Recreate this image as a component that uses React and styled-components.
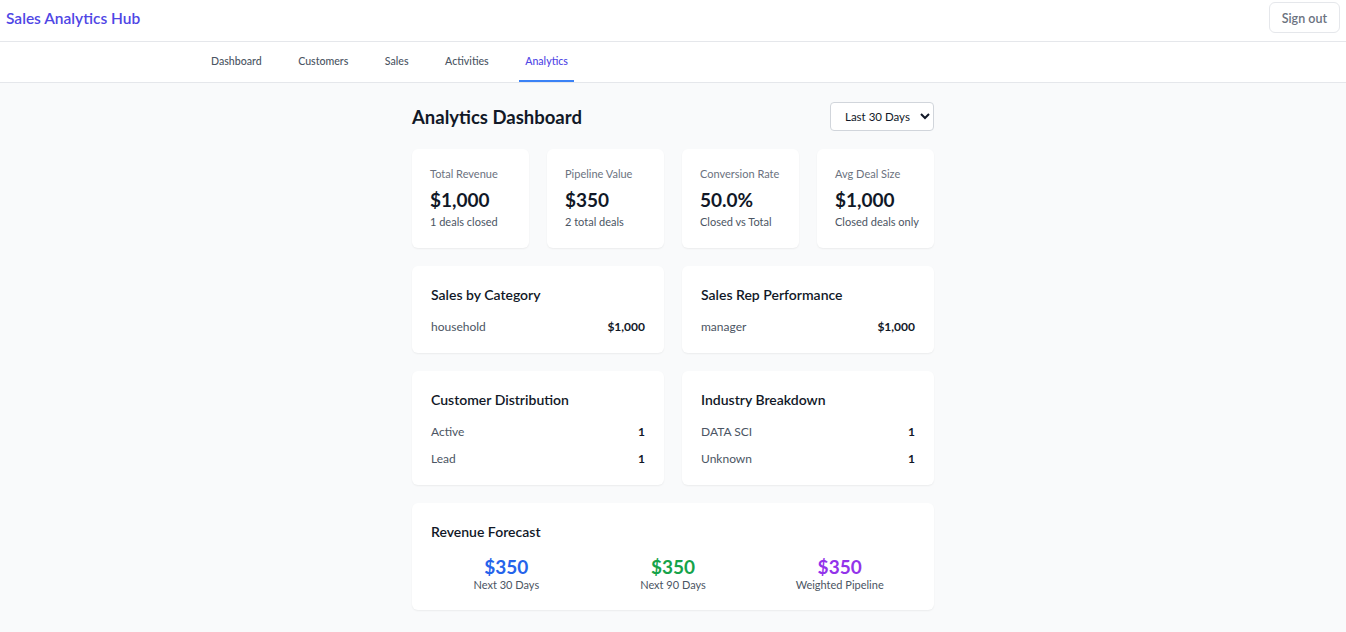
import styled, { createGlobalStyle } from "styled-components";

const GlobalStyle = createGlobalStyle`
  * { box-sizing: border-box; }
  body {
    margin: 0;
    background: #f9fafb;
    font-family: Lato, "Open Sans", sans-serif;
    color: #111827;
  }
`;

const stats = [
  { label: "Total Revenue", value: "$1,000", note: "1 deals closed" },
  { label: "Pipeline Value", value: "$350", note: "2 total deals" },
  { label: "Conversion Rate", value: "50.0%", note: "Closed vs Total" },
  { label: "Avg Deal Size", value: "$1,000", note: "Closed deals only" },
];

const tabs = ["Dashboard", "Customers", "Sales", "Activities", "Analytics"];

const forecast = [
  { value: "$350", label: "Next 30 Days", color: "#2563eb" },
  { value: "$350", label: "Next 90 Days", color: "#16a34a" },
  { value: "$350", label: "Weighted Pipeline", color: "#9333ea" },
];

// один список "подпись — значение"
const ListCard = ({ title, rows }) => (
  <Card>
    <CardTitle>{title}</CardTitle>
    <Rows>
      {rows.map(([k, v]) => (
        <Row key={k}>
          <RowLabel>{k}</RowLabel>
          <RowValue>{v}</RowValue>
        </Row>
      ))}
    </Rows>
  </Card>
);

export default function App() {
  return (
    <>
      <GlobalStyle />
      <Header>
        <Brand>Sales Analytics Hub</Brand>
        <SignOut>Sign out</SignOut>
      </Header>
      <Nav>
        {tabs.map((t) => (
          <Tab key={t} $active={t === "Analytics"}>
            {t}
          </Tab>
        ))}
      </Nav>
      <Main>
        <TitleRow>
          <PageTitle>Analytics Dashboard</PageTitle>
          <RangeSelect defaultValue="30">
            <option value="30">Last 30 Days</option>
            <option value="90">Last 90 Days</option>
          </RangeSelect>
        </TitleRow>

        <StatGrid>
          {stats.map((s) => (
            <StatCard key={s.label}>
              <StatLabel>{s.label}</StatLabel>
              <StatValue>{s.value}</StatValue>
              <StatNote>{s.note}</StatNote>
            </StatCard>
          ))}
        </StatGrid>

        <TwoCol>
          <ListCard title="Sales by Category" rows={[["household", "$1,000"]]} />
          <ListCard title="Sales Rep Performance" rows={[["manager", "$1,000"]]} />
        </TwoCol>

        <TwoCol>
          <ListCard title="Customer Distribution" rows={[["Active", "1"], ["Lead", "1"]]} />
          <ListCard title="Industry Breakdown" rows={[["DATA SCI", "1"], ["Unknown", "1"]]} />
        </TwoCol>

        <Card>
          <CardTitle>Revenue Forecast</CardTitle>
          <ForecastGrid>
            {forecast.map((f) => (
              <ForecastItem key={f.label}>
                <ForecastValue $color={f.color}>{f.value}</ForecastValue>
                <ForecastLabel>{f.label}</ForecastLabel>
              </ForecastItem>
            ))}
          </ForecastGrid>
        </Card>
      </Main>
    </>
  );
}

const Header = styled.header`
  height: 42px;
  display: flex;
  align-items: center;
  justify-content: space-between;
  padding: 0 6px;
  background: #fff;
  border-bottom: 1px solid #e5e7eb;
`;

const Brand = styled.h1`
  margin: 0;
  font-size: 15.5px;
  font-weight: 600;
  color: #4f46e5;
  position: relative;
  top: -3px;
`;

const SignOut = styled.button`
  height: 31px;
  padding: 2px 12px 0;
  background: #fff;
  border: 1px solid #e5e7eb;
  border-radius: 6px;
  font-family: inherit;
  font-size: 12.5px;
  font-weight: 600;
  color: #6b7280;
  position: relative;
  top: -3px;
`;

const Nav = styled.nav`
  height: 41px;
  display: flex;
  gap: 24.5px;
  padding-left: 205px;
  background: #fff;
  border-bottom: 1px solid #e5e7eb;
`;

const Tab = styled.a`
  display: flex;
  align-items: center;
  padding: 0 6px 1px;
  font-size: 10.6px;
  font-weight: 500;
  color: ${(p) => (p.$active ? "#4f46e5" : "#4b5563")};
  border-bottom: 2px solid ${(p) => (p.$active ? "#3b82f6" : "transparent")};
`;

const Main = styled.main`
  width: 522px;
  margin: 0 auto;
  padding: 19px 0 24px;
  display: flex;
  flex-direction: column;
  gap: 18px;
`;

const TitleRow = styled.div`
  display: flex;
  align-items: center;
  justify-content: space-between;
`;

const PageTitle = styled.h2`
  margin: 0;
  font-size: 18.5px;
  font-weight: 700;
  color: #111827;
`;

const RangeSelect = styled.select`
  width: 104px;
  height: 29px;
  padding: 0 6px 0 10px;
  border: 1px solid #d1d5db;
  border-radius: 4px;
  background: #fff;
  font-family: inherit;
  font-size: 11.5px;
  color: #111827;
`;

const StatGrid = styled.div`
  display: grid;
  grid-template-columns: repeat(4, minmax(0, 1fr));
  gap: 18px;
`;

const Card = styled.section`
  background: #fff;
  border-radius: 6px;
  box-shadow: 0 1px 2px rgba(0, 0, 0, 0.06);
  padding: 19px 19px 18px;
`;

const StatCard = styled(Card)`
  padding: 18px 18px 18px;
  height: 99px;
  white-space: nowrap;
`;

const StatLabel = styled.div`
  font-size: 11px;
  color: #6b7280;
  line-height: 14px;
`;

const StatValue = styled.div`
  font-size: 19px;
  font-weight: 700;
  line-height: 24px;
  margin-top: 7px;
`;

const StatNote = styled.div`
  font-size: 11px;
  color: #4b5563;
  line-height: 14px;
  margin-top: 3px;
`;

const TwoCol = styled.div`
  display: grid;
  grid-template-columns: minmax(0, 1fr) minmax(0, 1fr);
  gap: 18px;
`;

const CardTitle = styled.h3`
  margin: 0 0 14px;
  font-size: 14px;
  font-weight: 600;
  line-height: 20px;
`;

const Rows = styled.div`
  display: flex;
  flex-direction: column;
  gap: 11px;
`;

const Row = styled.div`
  display: flex;
  justify-content: space-between;
  align-items: center;
  line-height: 16px;
`;

const RowLabel = styled.span`
  font-size: 12px;
  color: #4b5563;
`;

const RowValue = styled.span`
  font-size: 12px;
  font-weight: 700;
  color: #111827;
`;

const ForecastGrid = styled.div`
  display: grid;
  grid-template-columns: repeat(3, minmax(0, 1fr));
  gap: 16px;
`;

const ForecastItem = styled.div`
  text-align: center;
`;

const ForecastValue = styled.div`
  font-size: 19px;
  font-weight: 700;
  line-height: 22px;
  color: ${(p) => p.$color};
`;

const ForecastLabel = styled.div`
  font-size: 11px;
  color: #4b5563;
  line-height: 14px;
`;
